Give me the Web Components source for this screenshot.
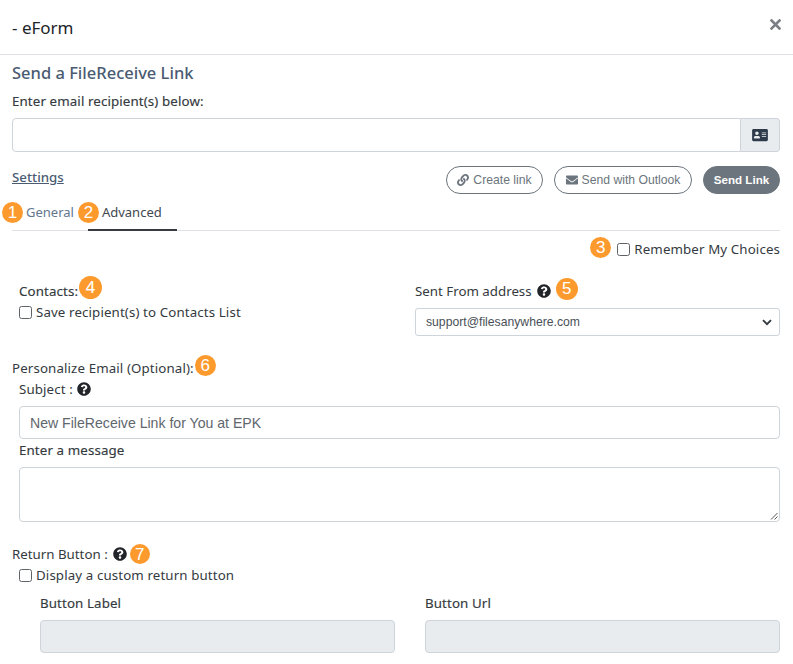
<!DOCTYPE html>
<html><head><meta charset="utf-8"><title>eForm</title>
<style>
html,body{margin:0;padding:0;background:#fff;height:664px;overflow:hidden}
body{font:13.300px/18px "Noto Sans","Open Sans",sans-serif;color:#343a40}
</style></head><body>
<efm-dialog></efm-dialog>
<script>
const def=(n,html)=>customElements.define(n,class extends HTMLElement{
  connectedCallback(){ if(this.shadowRoot)return; const r=this.attachShadow({mode:'open'}); r.innerHTML=html; }
});
const Q='<svg width="14" height="14" viewBox="0 0 512 512" style="display:block"><path fill="currentColor" d="M504 256c0 137-111 248-248 248S8 393 8 256 119 8 256 8s248 111 248 248zM262.700 90c-54.500 0-89.300 23-116.600 63.800-3.500 5.300-2.400 12.400 2.700 16.300l34.700 26.300c5.200 3.900 12.600 3 16.700-2.100 17.900-22.700 30.100-35.800 57.300-35.800 20.400 0 45.700 13.100 45.700 32.900 0 15-12.400 22.700-32.500 34-23.500 13.200-54.600 29.600-54.600 70.600V300c0 6.600 5.400 12 12 12h56c6.600 0 12-5.400 12-12v-1.300c0-28.400 83-29.600 83-106.500C379.100 134.300 319 90 262.700 90zM256 338c-25.400 0-46 20.600-46 46s20.600 46 46 46 46-20.600 46-46-20.600-46-46-46z"/></svg>';
def('efm-help',`<style>:host{display:inline-block;flex:none;width:14px;height:14px;color:#212529}</style>${Q}`);
def('efm-badge',`<style>:host{display:inline-flex;flex:none;align-items:center;justify-content:center;width:21px;height:21px;border-radius:50%;background:#fd9a2e;color:#fff;font:300 17px/21px "Liberation Sans",sans-serif}</style><slot></slot>`);
def('efm-check',`<style>:host{display:flex;align-items:center;gap:4px;font-size:13.300px;line-height:18px;letter-spacing:.12px}
i{display:block;box-sizing:border-box;width:13px;height:13px;border:1px solid #5f6368;border-radius:2.500px;background:#fff;flex:none}</style><i></i><span><slot></slot></span>`);
def('efm-pill',`<style>:host{display:inline-flex;align-items:center;justify-content:center;gap:4px;box-sizing:border-box;height:28px;border-radius:14px;border:1px solid #6c757d;color:#6c757d;background:#fff;font:12.200px/16px "Liberation Sans",sans-serif;white-space:nowrap}
:host([solid]){background:#6c757d;color:#fff;font-weight:700;font-size:11.600px}</style><slot></slot>`);
def('efm-input',`<style>:host{display:flex;align-items:center;box-sizing:border-box;height:33px;border:1px solid #ced4da;border-radius:4px;background:#fff;padding:0 10px;color:#5f666d;font:14.100px/20px "Liberation Sans",sans-serif}
:host([disabled]){background:#e9ecef}:host([area]){height:55px;position:relative}
svg{display:none}:host([area]) svg{display:block;position:absolute;right:1px;bottom:1px}</style><slot></slot><svg width="8" height="8" viewBox="0 0 8 8"><path d="M7.500 1L1 7.500M7.500 4.500L4.500 7.500" stroke="#555" stroke-width="1" fill="none"/></svg>`);
def('efm-select',`<style>:host{display:flex;align-items:center;justify-content:space-between;box-sizing:border-box;height:28px;border:1px solid #ced4da;border-radius:3px;background:#fff;padding:0 7px 0 10px;color:#495057;font:12.200px/16px "Liberation Sans",sans-serif}svg{display:block}</style><slot></slot>
<svg width="10" height="7" viewBox="0 0 10 7"><path d="M1 1.200l4 4 4-4" fill="none" stroke="#343a40" stroke-width="1.900"/></svg>`);
def('efm-header',`<style>:host{display:flex;align-items:center;justify-content:space-between;box-sizing:border-box;height:55px;padding:1px 12.500px 0 12px;border-bottom:1px solid #dee2e6;color:#212529;font-size:17px;line-height:24px}
svg{display:block;margin-top:-7px}</style><span><slot></slot></span>
<svg width="11" height="11" viewBox="0 0 11 11"><path d="M1.500 1.500l8 8M9.500 1.500l-8 8" stroke="#7b7f83" stroke-width="2.600" stroke-linecap="square" fill="none"/></svg>`);
def('efm-tabs',`<style>:host{display:flex;box-sizing:border-box;height:37px;border-bottom:1px solid #dee2e6}
.t{position:relative;box-sizing:border-box;height:37px;padding:8px 14px 0;line-height:20px;font-size:13px}
.g{color:#62778f}.a{color:#3f4750;border-bottom:2px solid #343a40;width:89px}
efm-badge{position:absolute;top:8px;left:-10px}</style>
<div class="t g">General<efm-badge>1</efm-badge></div><div class="t a">Advanced<efm-badge>2</efm-badge></div>`);
def('efm-dialog',`<style>
:host{display:block;width:793px;height:664px;overflow:hidden}
.body{padding:0 13px 0 12px}
h2{margin:7px 0 0;font:500 16.500px/22px "Noto Sans","Open Sans",sans-serif;color:#4a5b72}
.lbl{font-size:13.300px;line-height:18px;color:#343a40;letter-spacing:.12px}
.med{-webkit-text-stroke:.15px currentColor}
.recip{margin-top:8px}
.group{display:flex;height:34px;margin-top:8px}
.group .box{flex:1;box-sizing:border-box;border:1px solid #ced4da;border-radius:4px 0 0 4px}
.group .add{box-sizing:border-box;width:39px;border:1px solid #ced4da;border-left:0;border-radius:0 4px 4px 0;background:#e9ecef;display:flex;align-items:center;justify-content:center}
.actions{display:flex;align-items:center;margin-top:14px;height:28px;gap:11px}
.set{flex:1;color:#4a5b72;text-decoration:underline;font-weight:500;margin-top:-6px}
.rem{display:flex;justify-content:flex-end;align-items:center;gap:6px;margin-top:7px;height:22px}
.rem efm-badge{margin-bottom:4px}
.two{display:grid;grid-template-columns:1fr 365px;column-gap:20px;padding-left:7px;margin-top:20px}
.inl{display:flex;align-items:center;gap:1px;height:22px}
.sent{gap:5px;letter-spacing:0}
.two efm-check{margin-top:1px}
.two efm-select{margin-top:6px}
.pers{margin-top:21px}
.up{margin-bottom:5px}
.ind{padding-left:7px}
.subj{display:flex;align-items:center;gap:4px;height:18px;margin-top:1px}
.ind efm-input{margin-top:8px}
.msg{margin-top:2px;height:18px}
.ret{margin-top:21px;gap:5px;letter-spacing:0}
.ind2{margin-top:1px}
.btns{display:grid;grid-template-columns:355px 355px;column-gap:30px;padding-left:28px;margin-top:10px}
.btns efm-input{margin-top:8px}
svg{display:block}
</style>
<efm-header>- eForm</efm-header>
<div class="body">
<h2>Send a FileReceive Link</h2>
<div class="lbl med recip">Enter email recipient(s) below:</div>
<div class="group"><div class="box"></div><div class="add">
<svg width="16" height="14" viewBox="0 0 576 512"><path fill="#2d3a4a" d="M528 32H48C21.500 32 0 53.500 0 80v352c0 26.500 21.500 48 48 48h480c26.500 0 48-21.500 48-48V80c0-26.500-21.500-48-48-48zm-352 96c35.300 0 64 28.700 64 64s-28.700 64-64 64-64-28.700-64-64 28.700-64 64-64zm112 236.800c0 10.600-10 19.200-22.400 19.200H86.400C74 384 64 375.400 64 364.800v-19.200c0-31.800 30.100-57.600 67.200-57.600h5c12.300 5.100 25.700 8 39.800 8s27.600-2.900 39.800-8h5c37.100 0 67.200 25.800 67.200 57.600v19.200zM512 312c0 4.400-3.600 8-8 8H360c-4.400 0-8-3.600-8-8v-16c0-4.400 3.600-8 8-8h144c4.400 0 8 3.600 8 8v16zm0-64c0 4.400-3.600 8-8 8H360c-4.400 0-8-3.600-8-8v-16c0-4.400 3.600-8 8-8h144c4.400 0 8 3.600 8 8v16zm0-64c0 4.400-3.600 8-8 8H360c-4.400 0-8-3.600-8-8v-16c0-4.400 3.600-8 8-8h144c4.400 0 8 3.600 8 8v16z"/></svg></div></div>
<div class="actions"><div class="set">Settings</div>
<efm-pill style="width:97px"><svg style="display:block" width="12" height="12" viewBox="0 0 512 512"><path fill="#6c757d" d="M326.612 185.391c59.747 59.809 58.927 155.698.36 214.590-.11.12-.24.25-.36.37l-67.2 67.2c-59.270 59.270-155.699 59.262-214.960 0-59.270-59.260-59.270-155.700 0-214.960l37.106-37.106c9.840-9.840 26.786-3.300 27.294 10.606.648 17.722 3.826 35.527 9.690 52.721 1.986 5.822.567 12.262-3.783 16.612l-13.087 13.087c-28.026 28.026-28.905 73.660-1.155 101.960 28.024 28.579 74.086 28.749 102.325.51l67.2-67.190c28.191-28.191 28.073-73.757 0-101.830-3.701-3.694-7.429-6.564-10.341-8.569a16.037 16.037 0 0 1-6.947-12.606c-.396-10.567 3.348-21.456 11.698-29.806l21.054-21.055c5.521-5.521 14.182-6.199 20.584-1.731a152.482 152.482 0 0 1 20.522 17.197zM467.547 44.449c-59.261-59.262-155.690-59.270-214.960 0l-67.2 67.2c-.12.12-.25.25-.36.37-58.566 58.892-59.387 154.781.36 214.590a152.454 152.454 0 0 0 20.521 17.196c6.402 4.468 15.064 3.789 20.584-1.731l21.054-21.055c8.350-8.350 12.094-19.239 11.698-29.806a16.037 16.037 0 0 0-6.947-12.606c-2.912-2.005-6.640-4.875-10.341-8.569-28.073-28.073-28.191-73.639 0-101.830l67.2-67.190c28.239-28.239 74.300-28.069 102.325.51 27.750 28.300 26.872 73.934-1.155 101.960l-13.087 13.087c-4.350 4.350-5.769 10.790-3.783 16.612 5.864 17.194 9.042 34.999 9.690 52.721.509 13.906 17.454 20.446 27.294 10.606l37.106-37.106c59.271-59.259 59.271-155.699.001-214.959z"/></svg>Create link</efm-pill>
<efm-pill style="width:138px"><svg width="12" height="12" viewBox="0 0 512 512"><path fill="#6c757d" d="M502.300 190.800c3.900-3.100 9.700-.2 9.700 4.700V400c0 26.500-21.500 48-48 48H48c-26.500 0-48-21.500-48-48V195.600c0-5 5.700-7.800 9.700-4.700 22.400 17.400 52.100 39.500 154.100 113.600 21.100 15.400 56.700 47.800 92.200 47.600 35.700.3 72-32.800 92.300-47.600 102-74.100 131.600-96.300 154-113.700zM256 320c23.200.4 56.600-29.200 73.400-41.400 132.700-96.300 142.800-104.700 173.400-128.700 5.800-4.500 9.200-11.500 9.200-18.900v-19c0-26.500-21.500-48-48-48H48C21.500 64 0 85.500 0 112v19c0 7.400 3.400 14.300 9.200 18.900 30.600 23.900 40.700 32.400 173.400 128.700 16.800 12.200 50.200 41.800 73.400 41.400z"/></svg>Send with Outlook</efm-pill>
<efm-pill solid style="width:77px">Send Link</efm-pill></div>
<efm-tabs></efm-tabs>
<div class="rem"><efm-badge>3</efm-badge><efm-check>Remember My Choices</efm-check></div>
<div class="two">
<div><div class="lbl inl med">Contacts:<efm-badge class="up" style="width:23px;height:23px;margin-bottom:8px">4</efm-badge></div><efm-check>Save recipient(s) to Contacts List</efm-check></div>
<div><div class="lbl inl sent">Sent From address <efm-help></efm-help><efm-badge class="up" style="width:22px;height:22px">5</efm-badge></div><efm-select>support@filesanywhere.com</efm-select></div>
</div>
<div class="lbl inl pers">Personalize Email (Optional):<efm-badge class="up">6</efm-badge></div>
<div class="ind">
<div class="lbl subj">Subject : <efm-help></efm-help></div>
<efm-input>New FileReceive Link for You at EPK</efm-input>
<div class="lbl med msg">Enter a message</div>
<efm-input area></efm-input>
</div>
<div class="lbl inl ret">Return Button : <efm-help></efm-help><efm-badge style="margin-left:-2px;width:20px;height:20px">7</efm-badge></div>
<div class="ind ind2"><efm-check>Display a custom return button</efm-check></div>
<div class="btns">
<div><div class="lbl med">Button Label</div><efm-input disabled></efm-input></div>
<div><div class="lbl med">Button Url</div><efm-input disabled></efm-input></div>
</div>
</div>`);
</script>
</body></html>
